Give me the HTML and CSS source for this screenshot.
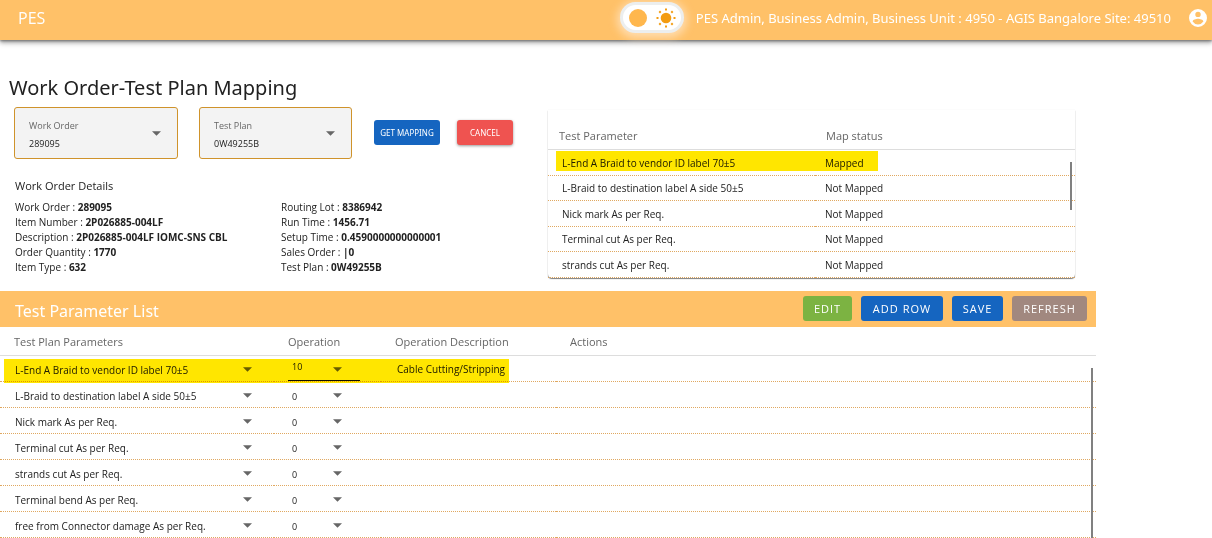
FILE: index.html
```
<!DOCTYPE html>
<html lang="en">
<head>
<meta charset="utf-8">
<title>PES</title>
<link rel="stylesheet" href="styles.css">
</head>
<body>
<header class="topbar">
  <span class="brand">PES</span>
  <label class="theme">
    <input class="theme-input" type="checkbox" aria-label="Light theme" checked>
    <span class="theme-knob"></span>
    <svg class="theme-sun" viewBox="0 0 20 20" aria-hidden="true">
      <circle cx="10" cy="10" r="5.300"/>
      <path d="M10 .5v2M10 17.500v2M.5 10h2M17.500 10h2M3.300 3.300l1.400 1.400M15.300 15.300l1.400 1.400M3.300 16.700l1.400-1.400M15.300 4.700l1.400-1.400"/>
    </svg>
  </label>
  <span class="user">PES Admin, Business Admin, Business Unit : 4950 - AGIS Bangalore Site: 49510</span>
  <button class="account" type="button" aria-label="Account">
    <svg viewBox="2 2 20 20" aria-hidden="true"><path d="M12 2a10 10 0 1 0 0 20 10 10 0 0 0 0-20zm0 3a3 3 0 1 1 0 6 3 3 0 0 1 0-6zm0 14.2a7.200 7.200 0 0 1-6-3.220c.03-1.990 4-3.080 6-3.080s5.970 1.090 6 3.080a7.200 7.200 0 0 1-6 3.220z"/></svg>
  </button>
</header>

<main class="page">
  <div class="overview">
    <section class="order">
      <h1 class="title">Work Order-Test Plan Mapping</h1>
      <form class="filters">
        <div class="field field-order">
          <label class="field-label" for="work-order">Work Order</label>
          <select class="field-select" id="work-order"><option>289095</option></select>
        </div>
        <div class="field field-plan">
          <label class="field-label" for="test-plan">Test Plan</label>
          <select class="field-select" id="test-plan"><option>0W49255B</option></select>
        </div>
        <button class="btn btn-small btn-get" type="button">GET MAPPING</button>
        <button class="btn btn-small btn-cancel" type="button">CANCEL</button>
      </form>
      <h2 class="subtitle">Work Order Details</h2>
      <div class="details">
        <ul class="detail-list">
          <li>Work Order : <b>289095</b></li>
          <li>Item Number : <b>2P026885-004LF</b></li>
          <li>Description : <b>2P026885-004LF IOMC-SNS CBL</b></li>
          <li>Order Quantity : <b>1770</b></li>
          <li>Item Type : <b>632</b></li>
        </ul>
        <ul class="detail-list">
          <li>Routing Lot : <b>8386942</b></li>
          <li>Run Time : <b>1456.71</b></li>
          <li>Setup Time : <b>0.4590000000000001</b></li>
          <li>Sales Order : <b>|0</b></li>
          <li>Test Plan : <b>0W49255B</b></li>
        </ul>
      </div>
    </section>

    <section class="status-card">
      <table class="status">
        <thead><tr><th class="col-param">Test Parameter</th><th>Map status</th></tr></thead>
        <tbody>
          <tr><td>L-End A Braid to vendor ID label 70±5</td><td>Mapped</td></tr>
          <tr><td>L-Braid to destination label A side 50±5</td><td>Not Mapped</td></tr>
          <tr><td>Nick mark As per Req.</td><td>Not Mapped</td></tr>
          <tr><td>Terminal cut As per Req.</td><td>Not Mapped</td></tr>
          <tr><td>strands cut As per Req.</td><td>Not Mapped</td></tr>
        </tbody>
      </table>
      <span class="marker marker-status"></span>
      <span class="thumb thumb-status"></span>
    </section>
  </div>

  <section class="list">
    <div class="list-bar">
      <h2 class="list-title">Test Parameter List</h2>
      <button class="btn btn-edit" type="button">EDIT</button>
      <button class="btn btn-add" type="button">ADD ROW</button>
      <button class="btn btn-save" type="button">SAVE</button>
      <button class="btn btn-refresh" type="button">REFRESH</button>
    </div>
    <div class="list-body">
      <table class="params">
        <thead><tr><th class="col-plan">Test Plan Parameters</th><th class="col-op">Operation</th><th class="col-desc">Operation Description</th><th>Actions</th></tr></thead>
        <tbody>
          <tr><td><select class="cell-select" aria-label="Parameter 1"><option>L-End A Braid to vendor ID label 70±5</option></select></td><td><select class="cell-select op op-active" aria-label="Operation 1"><option>10</option></select></td><td>Cable Cutting/Stripping</td><td></td></tr>
          <tr><td><select class="cell-select" aria-label="Parameter 2"><option>L-Braid to destination label A side 50±5</option></select></td><td><select class="cell-select op" aria-label="Operation 2"><option>0</option></select></td><td></td><td></td></tr>
          <tr><td><select class="cell-select" aria-label="Parameter 3"><option>Nick mark As per Req.</option></select></td><td><select class="cell-select op" aria-label="Operation 3"><option>0</option></select></td><td></td><td></td></tr>
          <tr><td><select class="cell-select" aria-label="Parameter 4"><option>Terminal cut As per Req.</option></select></td><td><select class="cell-select op" aria-label="Operation 4"><option>0</option></select></td><td></td><td></td></tr>
          <tr><td><select class="cell-select" aria-label="Parameter 5"><option>strands cut As per Req.</option></select></td><td><select class="cell-select op" aria-label="Operation 5"><option>0</option></select></td><td></td><td></td></tr>
          <tr><td><select class="cell-select" aria-label="Parameter 6"><option>Terminal bend As per Req.</option></select></td><td><select class="cell-select op" aria-label="Operation 6"><option>0</option></select></td><td></td><td></td></tr>
          <tr><td><select class="cell-select" aria-label="Parameter 7"><option>free from Connector damage As per Req.</option></select></td><td><select class="cell-select op" aria-label="Operation 7"><option>0</option></select></td><td></td><td></td></tr>
        </tbody>
      </table>
      <span class="marker marker-list"></span>
      <span class="thumb thumb-list"></span>
    </div>
  </section>
</main>
</body>
</html>
```
FILE: styles.css
```
* { box-sizing: border-box; }

:root {
  --arrow: url("data:image/svg+xml,%3Csvg xmlns='http://www.w3.org/2000/svg' viewBox='0 0 10 5'%3E%3Cpath d='M0 0h10L5 5z' fill='%23666'/%3E%3C/svg%3E");
}

body {
  margin: 0;
  overflow: hidden;
  background: #fff;
  color: #212121;
  font-family: "Open Sans", "Noto Sans", sans-serif;
  font-size: 10px;
  line-height: 15px;
}

h1, h2, ul { margin: 0; padding: 0; font-weight: 400; }
ul { list-style: none; }
select, button { font-family: inherit; color: inherit; }

.topbar {
  display: flex;
  align-items: center;
  height: 40px;
  padding: 0 5px 5px 18px;
  background: #ffc168;
  color: #fff;
  box-shadow: 0 2px 4px rgba(0, 0, 0, .3), 0 4px 5px rgba(0, 0, 0, .14), 0 1px 2px rgba(0, 0, 0, .3);
}
.brand { flex: 1; font-size: 16px; line-height: 24px; }
.theme {
  position: relative;
  display: flex;
  align-items: center;
  justify-content: space-between;
  width: 64px;
  height: 31px;
  padding: 0 5px 0 6px;
  border: 3px solid #eceeee;
  border-radius: 16px;
  background: #fff;
  box-shadow: 0 2px 8px 3px rgba(255, 232, 205, .7);
}
.theme-input { position: absolute; inset: 0; margin: 0; opacity: 0; }
.theme-knob { width: 18px; height: 18px; border-radius: 50%; background: #ffb74d; }
.theme-sun { width: 20px; height: 20px; fill: #f39c12; stroke: #f39c12; stroke-width: 2; }
.theme-sun circle { stroke: none; }
.user {
  margin: 0 18px 0 12px;
  font-family: "Noto Sans", sans-serif;
  font-size: 13px;
  line-height: 20px;
  white-space: nowrap;
}
.account { width: 18px; height: 18px; padding: 0; border: 0; background: none; }
.account svg { display: block; fill: #fff; }

.page { width: 100%; padding-right: 116px; }
.overview { display: flex; justify-content: space-between; height: 251px; padding: 32px 21px 0 0; }
.order { flex: 1; }
.title { padding-left: 9px; font-family: "Noto Sans", sans-serif; font-size: 20px; line-height: 32px; }

.filters { display: flex; align-items: flex-start; padding: 3px 0 0 14px; }
.field {
  position: relative;
  height: 52px;
  border: 1px solid #cf932b;
  border-radius: 3px;
  background: #f3f3f3;
}
.field-order { width: 164px; margin-right: 21px; }
.field-plan { width: 153px; margin-right: 22px; }
.field-label { position: absolute; top: 10px; left: 14px; color: #666; font-size: 9px; }
.field-select {
  width: 100%;
  height: 50px;
  padding: 21px 14px 0;
  border: 0;
  appearance: none;
  background: var(--arrow) right 16px center / 9px 5px no-repeat;
  font-size: 9px;
}

.btn {
  height: 25px;
  padding: 0;
  border: 0;
  border-radius: 3px;
  color: #fff;
  font-size: 11px;
  letter-spacing: 1px;
  white-space: nowrap;
}
.btn-small { margin-top: 13px; font-family: "Noto Sans", sans-serif; font-size: 8px; letter-spacing: 0; }
.btn-get { width: 66px; margin-right: 17px; background: #1565c0; }
.btn-cancel { width: 56px; background: #ef5350; box-shadow: 0 1px 3px rgba(0, 0, 0, .4); }
.btn-edit { width: 49px; background: #7cb342; }
.btn-add { width: 82px; background: #1565c0; }
.btn-save { width: 51px; background: #1565c0; }
.btn-refresh { width: 75px; background: #a1887f; }

.subtitle { padding: 17px 0 0 15px; font-size: 11px; line-height: 20px; }
.details { display: grid; grid-template-columns: 266px 1fr; padding: 4px 0 0 15px; }
.detail-list { font-size: 10px; line-height: 15px; }

table { width: 100%; border-spacing: 0; table-layout: fixed; }
th, td { padding: 0; text-align: left; white-space: nowrap; font-weight: 400; }
th { border-bottom: 1px solid #ddd; color: #666; font-size: 11px; }
td { border-bottom: 1px dotted #e0a860; font-size: 10px; }

.status-card {
  position: relative;
  width: 527px;
  height: 168px;
  margin-top: 38px;
  border-radius: 0 0 4px 4px;
  box-shadow: 0 1px 1px rgba(0, 0, 0, .5), 0 0 1px rgba(0, 0, 0, .15);
}
.status th { height: 40px; padding: 11px 0 0 11px; }
.status td { height: 26px; padding: 1px 0 0 14px; }
.status tr:nth-child(even) td { height: 25px; }
.status .col-param { width: 267px; }
.status th + th { padding-left: 11px; }
.status td + td { padding-left: 10px; }

.marker { position: absolute; background: #ffe600; mix-blend-mode: multiply; pointer-events: none; }
.marker-status { top: 41px; left: 8px; width: 322px; height: 20px; }
.marker-list { top: 32px; left: 4px; width: 505px; height: 24px; }
.thumb { position: absolute; width: 2px; background: #808080; }
.thumb-status { top: 52px; right: 3px; height: 48px; }
.thumb-list { top: 41px; right: 3px; bottom: 0; }

.list-bar {
  display: flex;
  align-items: center;
  gap: 9px;
  height: 36px;
  padding: 0 9px 1px 15px;
  background: #ffc168;
}
.list-title {
  flex: 1;
  padding-top: 5px;
  color: #fff;
  font-family: "Noto Sans", sans-serif;
  font-size: 16px;
  line-height: 24px;
}
.list-body { position: relative; }
.params th { height: 29px; padding-left: 14px; }
.params td { height: 26px; padding: 1px 0 0 15px; }
.params .col-plan { width: 274px; }
.params .col-op { width: 107px; }
.params .col-desc { width: 175px; }
.params td:nth-child(2) { padding-left: 14px; }
.params td:nth-child(3) { padding-left: 16px; }
.cell-select {
  display: block;
  width: 237px;
  height: 24px;
  padding: 2px 0 0;
  border: 0;
  appearance: none;
  background: var(--arrow) right top 10px / 9px 5px no-repeat;
  font-size: 10px;
}
.op { width: 72px; padding-left: 4px; background-position: right 18px top 10px; font-size: 9px; }
.op-active { padding-bottom: 6px; border-bottom: 1px solid #111; }
```
